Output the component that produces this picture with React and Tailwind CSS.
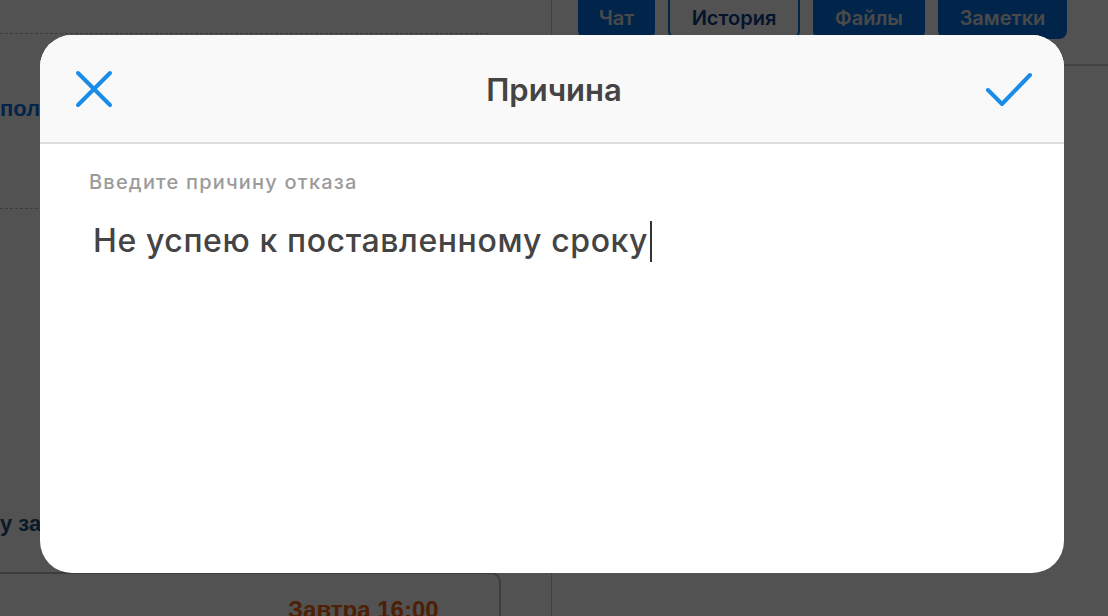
import { useState } from 'react';

const font = { fontFamily: 'Inter, "Noto Sans", sans-serif' };

function CloseIcon() {
  return (
    <svg width="40" height="40" viewBox="0 0 40 40" fill="none">
      <path d="M4 4L36 36M36 4L4 36" stroke="#1a8ce8" strokeWidth="4" strokeLinecap="round" />
    </svg>
  );
}

function CheckIcon() {
  return (
    <svg width="50" height="40" viewBox="0 0 50 40" fill="none">
      <path d="M4 21L18 35L46 6" stroke="#1a8ce8" strokeWidth="4" strokeLinecap="round" strokeLinejoin="round" />
    </svg>
  );
}

function Background() {
  const tabs = [
    { label: 'Чат', w: 'w-[77px]', active: true },
    { label: 'История', w: 'w-[132px]', active: false },
    { label: 'Файлы', w: 'w-[112px]', active: true },
    { label: 'Заметки', w: 'w-[129px]', active: true },
  ];
  return (
    <div className="flex h-full w-full bg-white" style={{ fontFamily: '"Liberation Sans", Arial, sans-serif' }}>
      {/* Left list */}
      <div className="flex w-[552px] shrink-0 flex-col overflow-hidden border-r border-[#c8c8c8]">
        <div className="mr-[63px] h-[34px] shrink-0 border-b border-dashed border-[#bbb]" />
        <div className="flex h-[175px] shrink-0 items-start border-b border-dashed border-[#bbb] pt-[58px] text-[22px] font-bold text-[#0a72e0]">
          полный список
        </div>
        <div className="flex h-[363px] shrink-0 items-end pb-[32px] text-[22px] font-bold text-[#1f4f80]">
          у задачи есть
        </div>
        <div className="mr-[50px] h-[80px] shrink-0 rounded-tr-[10px] border-t-2 border-r-2 border-[#bbb] pt-[18px] pl-[288px] text-[24px] font-bold text-[#f06410]">
          Завтра 16:00
        </div>
      </div>

      {/* Right panel */}
      <div className="flex flex-1 flex-col">
        <div className="flex h-[66px] items-start gap-[13px] border-b-2 border-[#ccc] pl-[26px]" style={font}>
          {tabs.map((t) => (
            <div
              key={t.label}
              className={
                t.active
                  ? `${t.w} flex h-[39px] items-end justify-center rounded-b-[8px] bg-[#0070e6] pb-[6px] text-[20px] font-semibold text-[#e4e4e4]`
                  : `${t.w} flex h-[39px] items-end justify-center rounded-b-[8px] border-2 border-t-0 border-[#0070e6] bg-white pb-[4px] text-[20px] font-semibold text-[#0a3f8a]`
              }
            >
              {t.label}
            </div>
          ))}
        </div>
      </div>
    </div>
  );
}

export default function App() {
  const [reason] = useState('Не успею к поставленному сроку');

  return (
    <div className="relative h-[616px] w-[1108px] overflow-hidden">
      <Background />

      {/* Dimmed overlay with modal */}
      <div className="absolute inset-0 bg-black/[0.68] pl-[40px] pt-[35px]">
        <div className="flex h-[538px] w-[1024px] flex-col overflow-hidden rounded-[32px] bg-white" style={font}>
          <div className="grid h-[109px] shrink-0 grid-cols-[1fr_auto_1fr] items-center border-b-2 border-[#dddddd] bg-[#f9f9f9] pl-[34px] pr-[30px]">
            <div className="flex justify-start">
              <CloseIcon />
            </div>
            <div className="pt-[3px] text-[31px] font-semibold text-[#444444]">Причина</div>
            <div className="flex justify-end pl-[1px]">
              <CheckIcon />
            </div>
          </div>

          <div className="flex flex-col px-[49px] pt-[25px]">
            <div className="text-[20px] font-medium leading-[26px] tracking-[1.2px] text-[#9b9b9b]">Введите причину отказа</div>
            <div className="mt-[24px] flex items-center pl-[4px] text-[32px] font-medium leading-[44px] tracking-[0.6px] text-[#444444]">
              <span>{reason}</span>
              <span className="ml-[2px] inline-block h-[41px] w-[2px] bg-[#333]" />
            </div>
          </div>
        </div>
      </div>
    </div>
  );
}
